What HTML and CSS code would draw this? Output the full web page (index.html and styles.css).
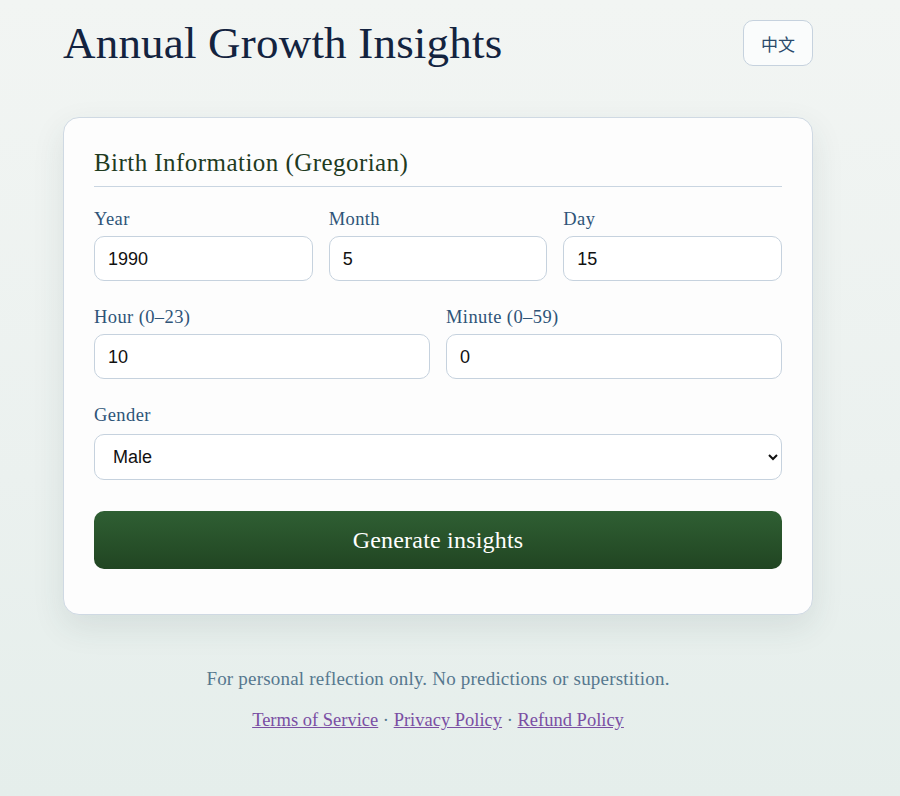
FILE: index.html
```html
<!DOCTYPE html>
<html lang="en">
<head>
<meta charset="utf-8">
<title>Annual Growth Insights</title>
<link rel="stylesheet" href="styles.css">
</head>
<body>
<div class="page">
  <header class="top">
    <h1 class="title">Annual Growth Insights</h1>
    <button class="lang" type="button">中文</button>
  </header>

  <form class="card">
    <h2 class="card-title">Birth Information (Gregorian)</h2>

    <div class="row row-3">
      <div class="field">
        <label class="label">Year</label>
        <input class="input" type="text" value="1990">
      </div>
      <div class="field">
        <label class="label">Month</label>
        <input class="input" type="text" value="5">
      </div>
      <div class="field">
        <label class="label">Day</label>
        <input class="input" type="text" value="15">
      </div>
    </div>

    <div class="row row-2">
      <div class="field">
        <label class="label">Hour (0–23)</label>
        <input class="input" type="text" value="10">
      </div>
      <div class="field">
        <label class="label">Minute (0–59)</label>
        <input class="input" type="text" value="0">
      </div>
    </div>

    <div class="row">
      <div class="field">
        <label class="label">Gender</label>
        <select class="select">
          <option>Male</option>
          <option>Female</option>
        </select>
      </div>
    </div>

    <button class="submit" type="button">Generate insights</button>
  </form>

  <footer class="foot">
    <p class="note">For personal reflection only. No predictions or superstition.</p>
    <p class="links"><a href="#terms">Terms of Service</a> · <a href="#privacy">Privacy Policy</a> · <a href="#refund">Refund Policy</a></p>
  </footer>
</div>
</body>
</html>
```

FILE: styles.css
```css
html, body {
  margin: 0;
  padding: 0;
}

body {
  min-height: 796px;
  background: linear-gradient(180deg, #f2f5f3 0%, #ebf1ef 60%, #e5eeeb 100%);
  font-family: "Liberation Serif", "Times New Roman", serif;
  color: #14233d;
}

.page {
  width: 750px;
  margin-left: 63px;
  padding-top: 20px;
  padding-bottom: 40px;
}

.top {
  display: flex;
  justify-content: space-between;
  align-items: flex-start;
  margin-bottom: 51px;
}

.title {
  margin: 0;
  font-size: 45px;
  line-height: 46px;
  font-weight: 400;
  color: #13233f;
  letter-spacing: 0.2px;
}

.lang {
  width: 70px;
  height: 46px;
  border: 1px solid #c6d2de;
  border-radius: 10px;
  background: #fafcfc;
  color: #2b4a6b;
  font-family: "Noto Sans CJK SC", "Noto Sans", sans-serif;
  font-size: 17px;
  padding: 0;
  cursor: pointer;
}

.card {
  display: block;
  background: #fdfdfd;
  border: 1px solid #cfd9e3;
  border-radius: 16px;
  padding: 30px 30px 45px;
  box-shadow: 0 12px 32px rgba(40, 70, 70, 0.10);
}

.card-title {
  margin: 0 0 21px;
  padding-bottom: 9px;
  border-bottom: 1px solid #c9d5e1;
  font-size: 25px;
  line-height: 29px;
  font-weight: 400;
  color: #1f3b1f;
  letter-spacing: 0.45px;
}

.row {
  display: grid;
  grid-template-columns: 1fr;
  gap: 16px;
  margin-bottom: 25px;
}

.row-3 {
  grid-template-columns: 1fr 1fr 1fr;
}

.row-2 {
  grid-template-columns: 1fr 1fr;
}

.field {
  display: flex;
  flex-direction: column;
  gap: 6px;
}

.label {
  font-size: 18.5px;
  line-height: 22px;
  color: #2e5478;
  letter-spacing: 0.4px;
}

.input,
.select {
  box-sizing: border-box;
  width: 100%;
  height: 45px;
  border: 1px solid #c6d2de;
  border-radius: 10px;
  background: #ffffff;
  font-family: "Liberation Sans", Arial, sans-serif;
  font-size: 18px;
  color: #111111;
  padding: 0 13px;
  margin: 0;
  outline: none;
}

.input {
  padding-top: 1px;
}

.select {
  height: 46px;
  padding: 0 14px;
  margin-top: 2px;
}

.submit {
  display: block;
  width: 100%;
  height: 58px;
  margin-top: 31px;
  border: none;
  border-radius: 10px;
  background: linear-gradient(180deg, #2f5f33 0%, #214522 100%);
  color: #ffffff;
  font-family: "Liberation Serif", "Times New Roman", serif;
  font-size: 24px;
  letter-spacing: 0.2px;
  cursor: pointer;
}

.foot {
  margin-top: 50px;
  text-align: center;
}

.note {
  margin: 0;
  font-size: 19px;
  line-height: 27px;
  color: #56788f;
  letter-spacing: 0.2px;
}

.links {
  margin: 15px 0 0;
  font-size: 18.5px;
  line-height: 27px;
  color: #56788f;
}

.links a {
  color: #7a4ea3;
  text-decoration: underline;
}
```
